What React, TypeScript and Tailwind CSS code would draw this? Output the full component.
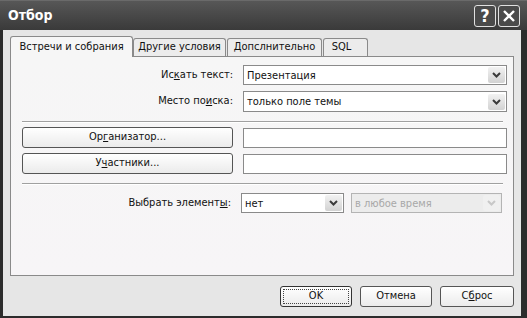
import React from "react";

const font = { fontFamily: "'DejaVu Sans Condensed', 'DejaVu Sans', sans-serif" };

const Chevron = ({ disabled }: { disabled?: boolean }) => (
  <svg width="9" height="6" viewBox="0 0 9 6">
    <path
      d="M1 1 L4.5 4.5 L8 1"
      fill="none"
      stroke={disabled ? "#c8c8c8" : "#3a3a3a"}
      strokeWidth="2"
    />
  </svg>
);

const Combo = ({
  value,
  className,
  disabled,
}: {
  value: string;
  className: string;
  disabled?: boolean;
}) => (
  <div
    className={`flex items-center border ${
      disabled ? "border-[#b4b4b4] bg-[#ececec] text-[#a8a8a8]" : "border-[#8a8a8a] bg-white text-[#111]"
    } h-[20px] pl-[3px] pr-[1px] ${className}`}
  >
    <span className="flex-1 text-[11px] leading-none">{value}</span>
    <div
      className={`flex h-[16px] w-[17px] items-center justify-center rounded-[2px] ${
        disabled ? "bg-[#f0f0f0]" : "bg-gradient-to-b from-[#f2f2f2] to-[#d2d2d2]"
      }`}
    >
      <Chevron disabled={disabled} />
    </div>
  </div>
);

const Btn = ({
  children,
  className,
  focused,
}: {
  children: React.ReactNode;
  className: string;
  focused?: boolean;
}) => (
  <button
    className={`flex h-[21px] items-center justify-center rounded-[3px] border ${
      focused ? "border-[#333]" : "border-[#555]"
    } bg-gradient-to-b from-white to-[#ebebeb] p-[2px] text-[11px] font-normal text-[#111] ${className}`}
  >
    <span
      className={`flex h-full w-full items-center justify-center ${
        focused ? "border border-dotted border-[#444]" : ""
      }`}
    >
      {children}
    </span>
  </button>
);

// keyboard mnemonic underline
const U = ({ children }: { children: React.ReactNode }) => (
  <span className="underline decoration-1 underline-offset-1">{children}</span>
);

export default function App() {
  return (
    <div className="flex h-[318px] w-[527px] flex-col bg-[#2c2c2c] pb-[2px] pl-[3px] pr-[6px]" style={font}>
      {/* title bar */}
      <div className="-ml-[3px] -mr-[6px] flex h-[30px] items-center border-t border-[#6a6a6a] bg-gradient-to-b from-[#575757] to-[#3a3a3a] pl-[5px] pr-[7px]">
        <span className="flex-1 pl-[3px] text-[14px] font-bold text-white">Отбор</span>
        <div className="flex gap-[2px]">
          <div className="flex h-[22px] w-[22px] items-center justify-center rounded-[3px] border border-[#e0e0e0] bg-[#4a4a4a] text-[18px] font-bold leading-none text-white">
            ?
          </div>
          <div className="flex h-[22px] w-[22px] items-center justify-center rounded-[3px] border border-[#e0e0e0] bg-[#4a4a4a]">
            <svg width="14" height="14" viewBox="0 0 14 14">
              <path d="M2 2 L12 12 M12 2 L2 12" stroke="white" strokeWidth="2.4" />
            </svg>
          </div>
        </div>
      </div>

      {/* body */}
      <div className="flex flex-1 flex-col bg-[#e6e6e6] px-[7px] pt-[6px]">
        {/* tabs */}
        <div className="relative z-10 flex h-[20px] items-end text-[11px] text-[#111]">
          <div className="-mb-[1px] flex h-[21px] w-[123px] items-center justify-center rounded-t-[3px] border border-b-0 border-[#8a8a8a] bg-[#f6f6f6]">
            Встречи и собрания
          </div>
          <div className="flex h-[18px] w-[93px] items-center justify-center rounded-t-[3px] border border-b-0 border-[#8a8a8a] bg-[#ececec]">
            Другие условия
          </div>
          <div className="ml-[1px] flex h-[18px] w-[95px] items-center justify-center rounded-t-[3px] border border-b-0 border-[#8a8a8a] bg-[#ececec]">
            Допслнительно
          </div>
          <div className="ml-[1px] flex h-[18px] w-[45px] items-center justify-center rounded-t-[3px] border border-b-0 border-[#8a8a8a] bg-[#ececec] pr-[8px]">
            SQL
          </div>
        </div>

        {/* panel */}
        <div className="flex h-[220px] flex-col border border-[#8a8a8a] bg-gradient-to-b from-[#f6f6f6] to-[#f7f5f7] pl-[11px] pr-[6px] pt-[8px] text-[11px] text-[#111]">
          <div className="flex items-center">
            <span className="w-[211px] text-right">
              Ис<U>к</U>ать текст:
            </span>
            <Combo value="Презентация" className="ml-[10px] flex-1" />
          </div>
          <div className="mt-[6px] flex items-center">
            <span className="w-[211px] text-right">
              Место по<U>и</U>ска:
            </span>
            <Combo value="только поле темы" className="ml-[10px] h-[21px] flex-1" />
          </div>

          <div className="mr-[4px] mt-[9px] h-[2px] border-b border-t border-[#a0a0a0] border-b-white" />

          <div className="mt-[4px] flex items-center">
            <Btn className="w-[211px]">
              Ор<U>г</U>анизатор...
            </Btn>
            <div className="ml-[10px] h-[20px] flex-1 border border-[#8a8a8a] bg-white" />
          </div>
          <div className="mt-[5px] flex items-center">
            <Btn className="w-[211px]">
              У<U>ч</U>астники...
            </Btn>
            <div className="ml-[10px] h-[20px] flex-1 border border-[#8a8a8a] bg-white" />
          </div>

          <div className="mr-[4px] mt-[9px] h-[2px] border-b border-t border-[#a0a0a0] border-b-white" />

          <div className="mt-[8px] flex items-center">
            <span className="w-[209px] text-right">
              Выбрать элемент<U>ы</U>:
            </span>
            <Combo value="нет" className="ml-[10px] w-[103px]" />
            <Combo value="в любое время" className="ml-[7px] w-[151px]" disabled />
          </div>
        </div>

        {/* footer */}
        <div className="flex justify-end gap-[8px] pt-[10px]">
          <Btn className="w-[72px]" focused>
            OK
          </Btn>
          <Btn className="w-[72px]">Отмена</Btn>
          <Btn className="w-[74px]">
            С<U>б</U>рос
          </Btn>
        </div>
      </div>
    </div>
  );
}
